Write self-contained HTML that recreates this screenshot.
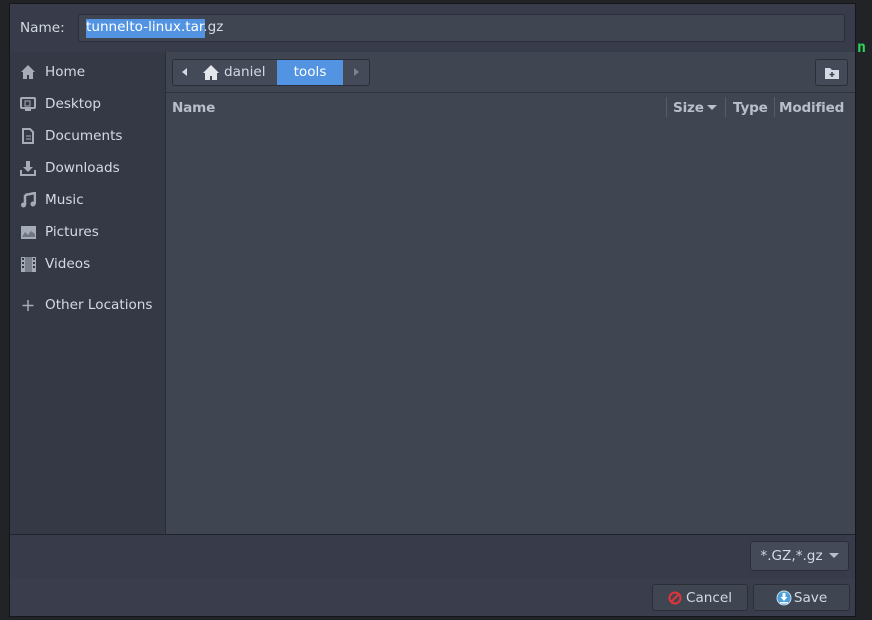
<!DOCTYPE html>
<html><head><style>
*{margin:0;padding:0;box-sizing:border-box}
body{width:872px;height:620px;background:#222326;font-family:"DejaVu Sans","Liberation Sans",sans-serif;font-size:13.6px;color:#d3dae3;position:relative;overflow:hidden}
.dlg{position:absolute;left:9px;top:3px;width:847px;height:614px;border:1px solid #15171c;background:#383c4a}
.abs{position:absolute}
.top{left:0;top:0;width:845px;height:48px;background:#383c4a}
.side{left:0;top:48px;width:156px;height:482px;background:#353945;border-right:1px solid #2b2e39}
.main{left:156px;top:48px;width:689px;height:482px;background:#404552}
.bot{left:0;top:530px;width:845px;height:44px;background:#383c4a;border-top:1px solid #20232b}
.bot2{left:0;top:574px;width:845px;height:38px;background:#3a3e4c}
.entry{left:68px;top:10px;width:767px;height:28px;border:1px solid #2b2e39;border-radius:3px;background:#404552}
.it{position:absolute;left:10px;height:20px;display:flex;align-items:center}
.it svg{margin-right:9px}
.btn{position:absolute;border:1px solid #2b2e39;border-radius:3px;background:#444a58;display:flex;align-items:center;justify-content:center}
.hd{font-weight:bold;color:#b8bfca;font-size:13.6px;position:absolute;top:96px;letter-spacing:-0.2px}
</style></head><body>
<div class="abs" style="left:857px;top:38px;color:#2fd05a;font-family:'DejaVu Sans Mono',monospace;font-size:15px;font-weight:bold;white-space:nowrap">n -</div>
<div class="dlg">
<div class="abs top"></div>
<div class="abs" style="left:10px;top:16px">Name:</div>
<div class="abs entry"><span class="abs" style="left:7px;top:4px;background:#5294e2;height:19px;width:119px"></span><span class="abs" style="left:7px;top:4px;color:#fff;white-space:nowrap">tunnelto-linux.tar<span style="color:#d3dae3">.gz</span></span></div>
<div class="abs side">
<div class="it" style="top:10px"><svg width="16" height="16"><path d="M8 1L1 8h2v7h4v-4h2v4h4V8h2z" fill="#a5abb7"/></svg>Home</div>
<div class="it" style="top:42px"><svg width="16" height="16"><rect x="1" y="2" width="14" height="10" rx="1" fill="none" stroke="#a5abb7" stroke-width="2"/><rect x="5" y="13" width="6" height="2" fill="#a5abb7"/><rect x="5" y="5" width="5" height="5" fill="none" stroke="#a5abb7"/></svg>Desktop</div>
<div class="it" style="top:74px"><svg width="16" height="16"><path d="M3 1h7l3 3v11H3z" fill="none" stroke="#a5abb7" stroke-width="2"/><path d="M6 8h5M6 11h5" stroke="#a5abb7"/></svg>Documents</div>
<div class="it" style="top:106px"><svg width="16" height="16"><path d="M6 1h4v6h3l-5 5-5-5h3z" fill="#a5abb7"/><path d="M1 10v5h14v-5" fill="none" stroke="#a5abb7" stroke-width="2"/></svg>Downloads</div>
<div class="it" style="top:138px"><svg width="16" height="16"><path d="M5 3l10-2v11" fill="none" stroke="#a5abb7" stroke-width="2.5"/><path d="M5 3v10" stroke="#a5abb7" stroke-width="2.5"/><circle cx="3.5" cy="13" r="2.5" fill="#a5abb7"/><circle cx="13" cy="12" r="2.5" fill="#a5abb7"/></svg>Music</div>
<div class="it" style="top:170px"><svg width="16" height="16"><rect x="1" y="2" width="15" height="13" fill="#a5abb7"/><path d="M2 13l3-5 3 3 3-4 4 3v3z" fill="#707684"/></svg>Pictures</div>
<div class="it" style="top:202px"><svg width="16" height="16"><rect x="1" y="1" width="15" height="15" fill="#a5abb7"/><rect x="5" y="1" width="7" height="15" fill="#7a808d"/><path d="M2 3h2M2 7h2M2 11h2M13 3h2M13 7h2M13 11h2" stroke="#353945" stroke-width="2"/></svg>Videos</div>
<div class="it" style="top:243px"><svg width="16" height="16"><path d="M8 3v11M2.5 8.5h11" stroke="#a5abb7" stroke-width="1.5"/></svg>Other Locations</div>
</div>
<div class="abs main">
<div class="abs" style="left:6px;top:7px;width:198px;height:27px;border:1px solid #2b2e39;border-radius:3px;background:#444a58"></div>
<svg class="abs" style="left:15px;top:15px" width="8" height="10"><path d="M6 1v8L1 5z" fill="#d3dae3"/></svg>
<svg class="abs" style="left:36px;top:12px" width="18" height="17"><path d="M9 1L1 9h2v7h5v-4h2v4h5V9h2z" fill="#e3e6ea"/></svg>
<div class="abs" style="left:58px;top:12px">daniel</div>
<div class="abs" style="left:111px;top:8px;width:66px;height:25px;background:#5294e2;color:#fff;text-align:center;line-height:25px">tools</div>
<svg class="abs" style="left:186px;top:15px" width="8" height="10"><path d="M2 1v8l5-4z" fill="#7c8290"/></svg>
<div class="btn" style="left:649px;top:7px;width:33px;height:27px"><svg width="14" height="12"><path d="M0 1h5l2 2h7v9H0z" fill="#d3dae3"/><path d="M7 5v5M4.5 7.5h5" stroke="#404552" stroke-width="1.6"/></svg></div>
<div class="abs" style="left:0;top:40px;width:689px;height:1px;background:#2e323d"></div>
</div>
<div class="hd" style="left:162px">Name</div>
<div class="abs" style="left:656px;top:93px;width:1px;height:20px;background:#575c6a"></div>
<div class="hd" style="left:663px">Size</div>
<svg class="abs" style="left:697px;top:101px" width="10" height="6"><path d="M0 0h10L5 5z" fill="#b8bfca"/></svg>
<div class="abs" style="left:715px;top:93px;width:1px;height:20px;background:#575c6a"></div>
<div class="hd" style="left:723px">Type</div>
<div class="abs" style="left:764px;top:93px;width:1px;height:20px;background:#575c6a"></div>
<div class="hd" style="left:769px">Modified</div>
<div class="abs bot"></div>
<div class="abs bot2"></div>
<div class="btn" style="left:740px;top:537px;width:99px;height:30px">*.GZ,*.gz<svg style="margin-left:6px" width="10" height="6"><path d="M0 0h10L5 5z" fill="#b8bfca"/></svg></div>
<div class="btn" style="left:642px;top:580px;width:96px;height:27px;background:#404552"><svg width="14" height="14" style="margin-right:4px"><circle cx="7" cy="7" r="5.5" fill="none" stroke="#e0343a" stroke-width="2"/><path d="M3 11L11 3" stroke="#e0343a" stroke-width="2"/></svg>Cancel</div>
<div class="btn" style="left:743px;top:580px;width:97px;height:27px;background:#404552"><svg width="16" height="16" style="margin-right:2px"><circle cx="8" cy="8" r="7" fill="#4a9fd8" stroke="#c9dbe8"/><path d="M6.5 3h3v4h2L8 11 4.5 7h2z" fill="#fff"/><rect x="4" y="12" width="8" height="1.5" fill="#fff"/></svg>Save</div>
</div>
</body></html>
